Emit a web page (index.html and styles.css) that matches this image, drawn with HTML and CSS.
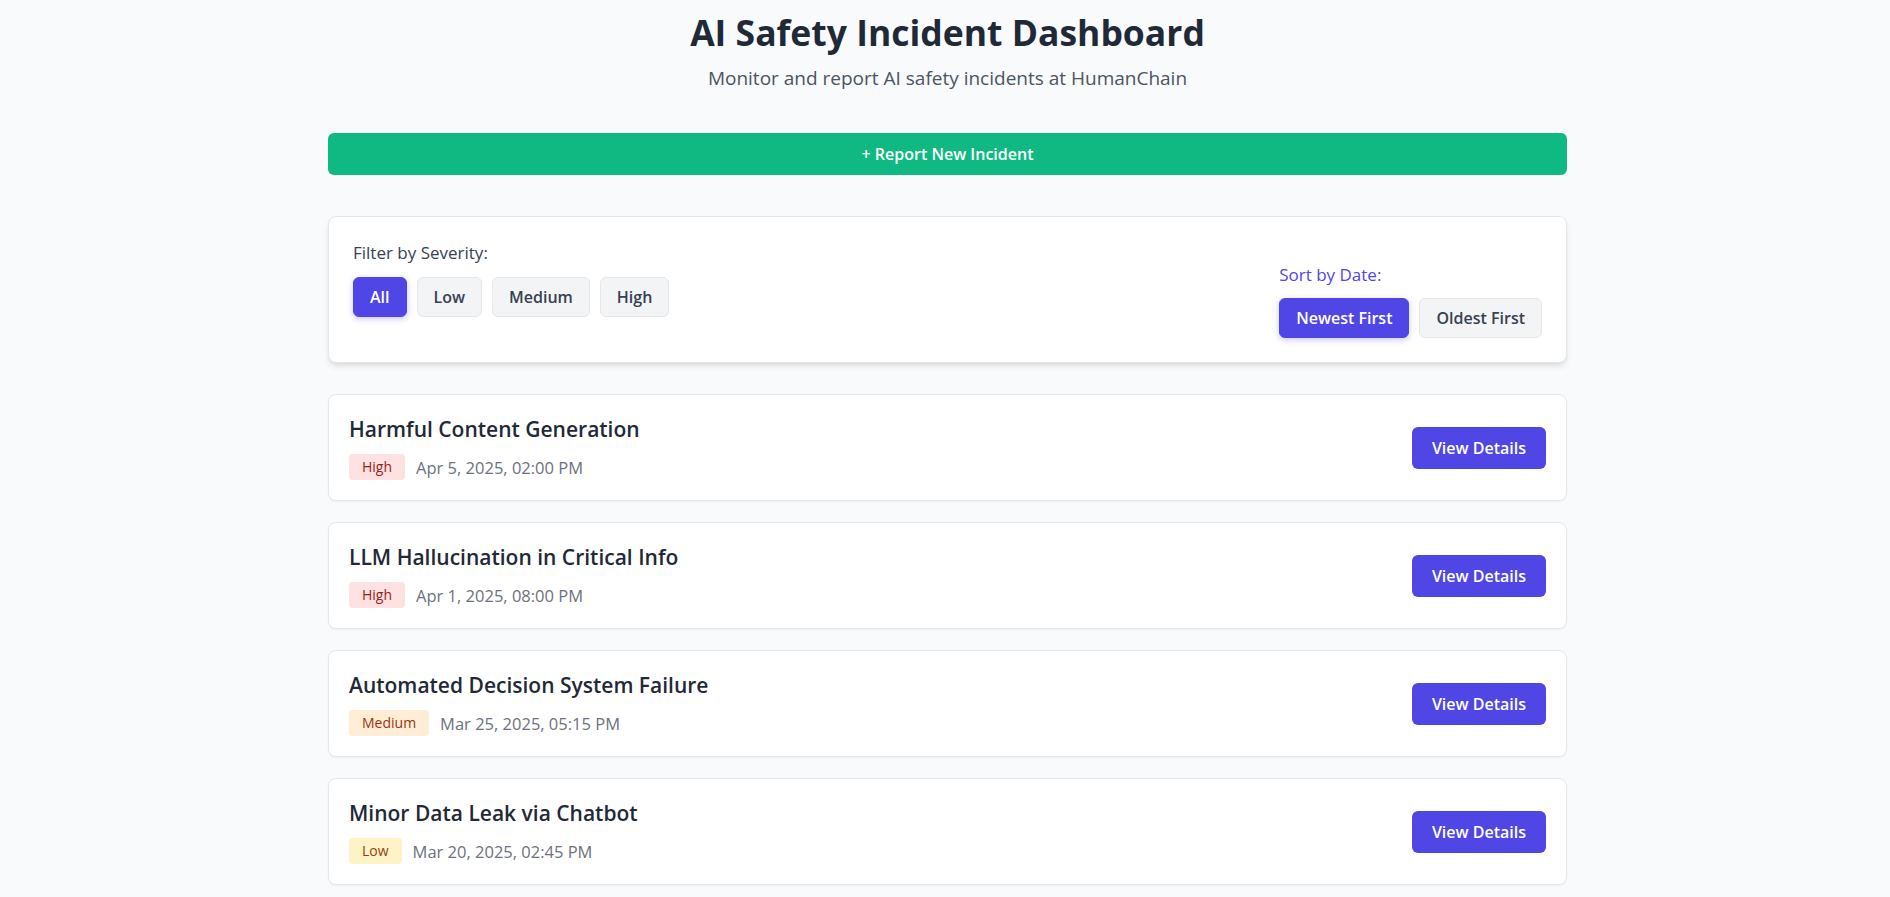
FILE: index.html
```html
<!DOCTYPE html>
<html lang="en">
<head>
<meta charset="utf-8">
<title>AI Safety Incident Dashboard</title>
<link rel="stylesheet" href="styles.css">
</head>
<body>
<div class="page">
  <header class="header">
    <h1 class="title">AI Safety Incident Dashboard</h1>
    <p class="subtitle">Monitor and report AI safety incidents at HumanChain</p>
  </header>

  <button class="report-btn">+ Report New Incident</button>

  <section class="controls">
    <div class="filter-group">
      <span class="filter-label">Filter by Severity:</span>
      <div class="btn-row">
        <button class="chip chip-active">All</button>
        <button class="chip">Low</button>
        <button class="chip">Medium</button>
        <button class="chip">High</button>
      </div>
    </div>
    <div class="sort-group">
      <span class="sort-label">Sort by Date:</span>
      <div class="btn-row">
        <button class="chip chip-active">Newest First</button>
        <button class="chip">Oldest First</button>
      </div>
    </div>
  </section>

  <section class="incidents">
    <article class="incident">
      <div class="incident-info">
        <h2 class="incident-title">Harmful Content Generation</h2>
        <div class="meta">
          <span class="badge badge-high">High</span>
          <span class="date">Apr 5, 2025, 02:00 PM</span>
        </div>
      </div>
      <button class="details-btn">View Details</button>
    </article>
    <article class="incident">
      <div class="incident-info">
        <h2 class="incident-title">LLM Hallucination in Critical Info</h2>
        <div class="meta">
          <span class="badge badge-high">High</span>
          <span class="date">Apr 1, 2025, 08:00 PM</span>
        </div>
      </div>
      <button class="details-btn">View Details</button>
    </article>
    <article class="incident">
      <div class="incident-info">
        <h2 class="incident-title">Automated Decision System Failure</h2>
        <div class="meta">
          <span class="badge badge-medium">Medium</span>
          <span class="date">Mar 25, 2025, 05:15 PM</span>
        </div>
      </div>
      <button class="details-btn">View Details</button>
    </article>
    <article class="incident">
      <div class="incident-info">
        <h2 class="incident-title">Minor Data Leak via Chatbot</h2>
        <div class="meta">
          <span class="badge badge-low">Low</span>
          <span class="date">Mar 20, 2025, 02:45 PM</span>
        </div>
      </div>
      <button class="details-btn">View Details</button>
    </article>
  </section>
</div>
</body>
</html>
```

FILE: styles.css
```css
* { box-sizing: border-box; }

html, body {
  margin: 0;
  padding: 0;
}

body {
  background: #f8fafc;
  font-family: "Open Sans", "Noto Sans", sans-serif;
  color: #1f2937;
}

.page {
  max-width: 1280px;
  margin: 0 auto;
  padding: 8px 18px 40px 23px;
}

.header {
  text-align: center;
}

.title {
  margin: 0;
  font-size: 35.5px;
  line-height: 48px;
  font-weight: 700;
  color: #1f2937;
}

.subtitle {
  margin: 8px 0 0;
  font-size: 19px;
  line-height: 28px;
  color: #4b5563;
}

.report-btn {
  display: block;
  width: 100%;
  margin-top: 41px;
  height: 42px;
  border: none;
  border-radius: 6px;
  background: #10b981;
  color: #ffffff;
  font-family: inherit;
  font-size: 16px;
  font-weight: 600;
}

.controls {
  margin-top: 41px;
  background: #ffffff;
  border: 1px solid #e5e7eb;
  border-radius: 8px;
  box-shadow: 0 4px 6px -1px rgba(0,0,0,0.1), 0 2px 4px -2px rgba(0,0,0,0.08);
  padding: 24px;
  display: flex;
  justify-content: space-between;
  align-items: flex-end;
}

.filter-group {
  margin-bottom: 21px;
}

.filter-label,
.sort-label {
  display: block;
  font-size: 17px;
  line-height: 24px;
  font-weight: 500;
  margin-bottom: 12px;
}

.filter-label { color: #374151; }
.sort-label { color: #4f46e5; margin-bottom: 11px; }

.btn-row {
  display: flex;
  gap: 10px;
}

.chip {
  height: 40px;
  padding: 0 16px;
  border: 1px solid #e5e7eb;
  border-radius: 6px;
  background: #f3f4f6;
  color: #374151;
  font-family: inherit;
  font-size: 16px;
  font-weight: 600;
}

.chip-active {
  background: #4f46e5;
  border-color: #4f46e5;
  color: #ffffff;
  box-shadow: 0 2px 6px rgba(79,70,229,0.3);
}

.incidents {
  margin-top: 31px;
  display: flex;
  flex-direction: column;
  gap: 21px;
}

.incident {
  background: #ffffff;
  border: 1px solid #e5e7eb;
  border-radius: 8px;
  box-shadow: 0 1px 2px rgba(0,0,0,0.05);
  padding: 20px;
  display: flex;
  justify-content: space-between;
  align-items: center;
}

.incident-title {
  margin: 0;
  font-size: 21px;
  line-height: 28px;
  font-weight: 600;
  color: #1f2937;
}

.meta {
  margin-top: 11px;
  display: flex;
  align-items: center;
  gap: 11px;
}

.badge {
  display: inline-block;
  height: 26px;
  line-height: 26px;
  padding: 0 13px;
  border-radius: 4px;
  font-size: 14px;
  font-weight: 500;
}

.badge-high { background: #fee2e2; color: #991b1b; }
.badge-medium { background: #ffedd5; color: #9a3412; }
.badge-low { background: #fef3c7; color: #92400e; }

.date {
  font-size: 16.5px;
  color: #6b7280;
}

.details-btn {
  height: 42px;
  padding: 0 20px;
  border: none;
  border-radius: 6px;
  background: #4f46e5;
  color: #ffffff;
  font-family: inherit;
  font-size: 16px;
  font-weight: 600;
}
```
